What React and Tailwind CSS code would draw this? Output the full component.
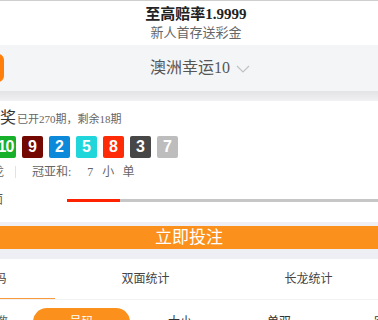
import React from 'react';

const balls = [
  { n: 10, c: 'bg-[#17b02a]' },
  { n: 9, c: 'bg-[#720800]' },
  { n: 2, c: 'bg-[#0c8ad9]' },
  { n: 5, c: 'bg-[#20d6db]' },
  { n: 8, c: 'bg-[#ff2a06]' },
  { n: 3, c: 'bg-[#474747]' },
  { n: 7, c: 'bg-[#bdbdbd]' },
];

const App = () => {
  return (
    <div className="w-[378px] h-[320px] overflow-hidden bg-white font-['Liberation_Serif','Noto_Sans_CJK_SC',serif] text-[#333]">
      {/* Header */}
      <div className="border-t border-[#cfcfcf] h-[45px] flex flex-col items-center pt-[4px]">
        <div className="text-[15px] font-bold leading-[18px] text-[#222] pl-[14px]">至高赔率1.9999</div>
        <div className="text-[13px] leading-[18px] mt-[1px] text-[#666] pl-[14px]">新人首存送彩金</div>
      </div>

      {/* Lottery selector */}
      <div className="h-[46px] bg-[#f4f5f7] flex items-center">
        <div className="shrink-0 -ml-[56px] w-[60px] h-[28px] rounded-[6px] bg-[#ff7f0a]" />
        <div className="flex-1 flex justify-center items-center pl-[18px] text-[16px] text-[#555]">
          <span>澳洲幸运10</span>
          <svg className="ml-[6px] mt-[2px]" width="14" height="8" viewBox="0 0 14 8" fill="none">
            <path d="M1 1l6 6 6-6" stroke="#c2c2c2" strokeWidth="1.2" />
          </svg>
        </div>
      </div>
      <div className="h-[10px] bg-gradient-to-b from-[#e3e3e5] to-[#f1f1f3]" />

      {/* Draw info */}
      <div className="pt-[7px]">
        <div className="flex items-end leading-[20px]">
          <span className="text-[16px] text-[#333]">奖</span>
          <span className="text-[11px] text-[#666] ml-[1px] leading-[18px]">已开270期，剩余18期</span>
        </div>
        <div className="flex gap-[6px] -ml-[5px] mt-[8px]">
          {balls.map((b, i) => (
            <div
              key={i}
              className={`${b.c} w-[21px] h-[22px] rounded-[2px] flex items-center justify-center text-white text-[16px] font-bold font-['Liberation_Sans',sans-serif] ${b.n === 10 ? 'tracking-[-1px]' : ''}`}
            >
              {b.n}
            </div>
          ))}
        </div>
        <div className="flex items-center mt-[5px] leading-[18px] text-[12px] text-[#666]">
          <span className="-ml-[8px]">龙</span>
          <span className="ml-[11px] w-px h-[12px] bg-[#e2e2e2]" />
          <span className="ml-[16px]">冠亚和:</span>
          <span className="ml-[16px]">7</span>
          <span className="ml-[9px]">小</span>
          <span className="ml-[8px]">单</span>
        </div>
        <div className="flex items-center h-[20px] mt-[9px]">
          <span className="-ml-[9px] text-[12px] text-[#555]">面</span>
          <div className="ml-[64px] flex-1 h-[3px] bg-[#c6c6c6] flex">
            <div className="w-[53px] h-full bg-[#ff2200]" />
          </div>
        </div>
      </div>

      {/* Bet button */}
      <div className="mt-[12px] h-[4px] bg-[#efeff4]" />
      <div className="h-[23px] bg-[#fb901d] flex items-center justify-center text-white text-[17px]">
        立即投注
      </div>
      <div className="h-[10px] bg-[#eeeef5]" />

      {/* Tabs */}
      <div className="flex h-[41px] border-b border-[#f2f2f2] text-[12px] text-[#444]">
        <div className="relative shrink-0 -ml-[99px] w-[163px] flex items-center justify-center">
          历史号码
          <div className="absolute bottom-0 left-0 w-[154px] h-[1px] bg-[#fb9a3c]" />
        </div>
        <div className="shrink-0 w-[163px] flex items-center justify-center">双面统计</div>
        <div className="shrink-0 w-[163px] flex items-center justify-center">长龙统计</div>
      </div>

      {/* Sub tabs */}
      <div className="flex items-center pt-[8px] text-[12px] text-[#333]">
        <span className="-ml-[16px] shrink-0 text-[#555]">总数</span>
        <div className="ml-[25px] shrink-0 w-[97px] h-[28px] rounded-full bg-[#fb901d] text-white flex items-center justify-center">
          号码
        </div>
        <span className="ml-[38px] shrink-0">大小</span>
        <span className="ml-[75px] shrink-0">单双</span>
        <span className="ml-[83px] shrink-0">完全</span>
      </div>
    </div>
  );
};

export default App;
